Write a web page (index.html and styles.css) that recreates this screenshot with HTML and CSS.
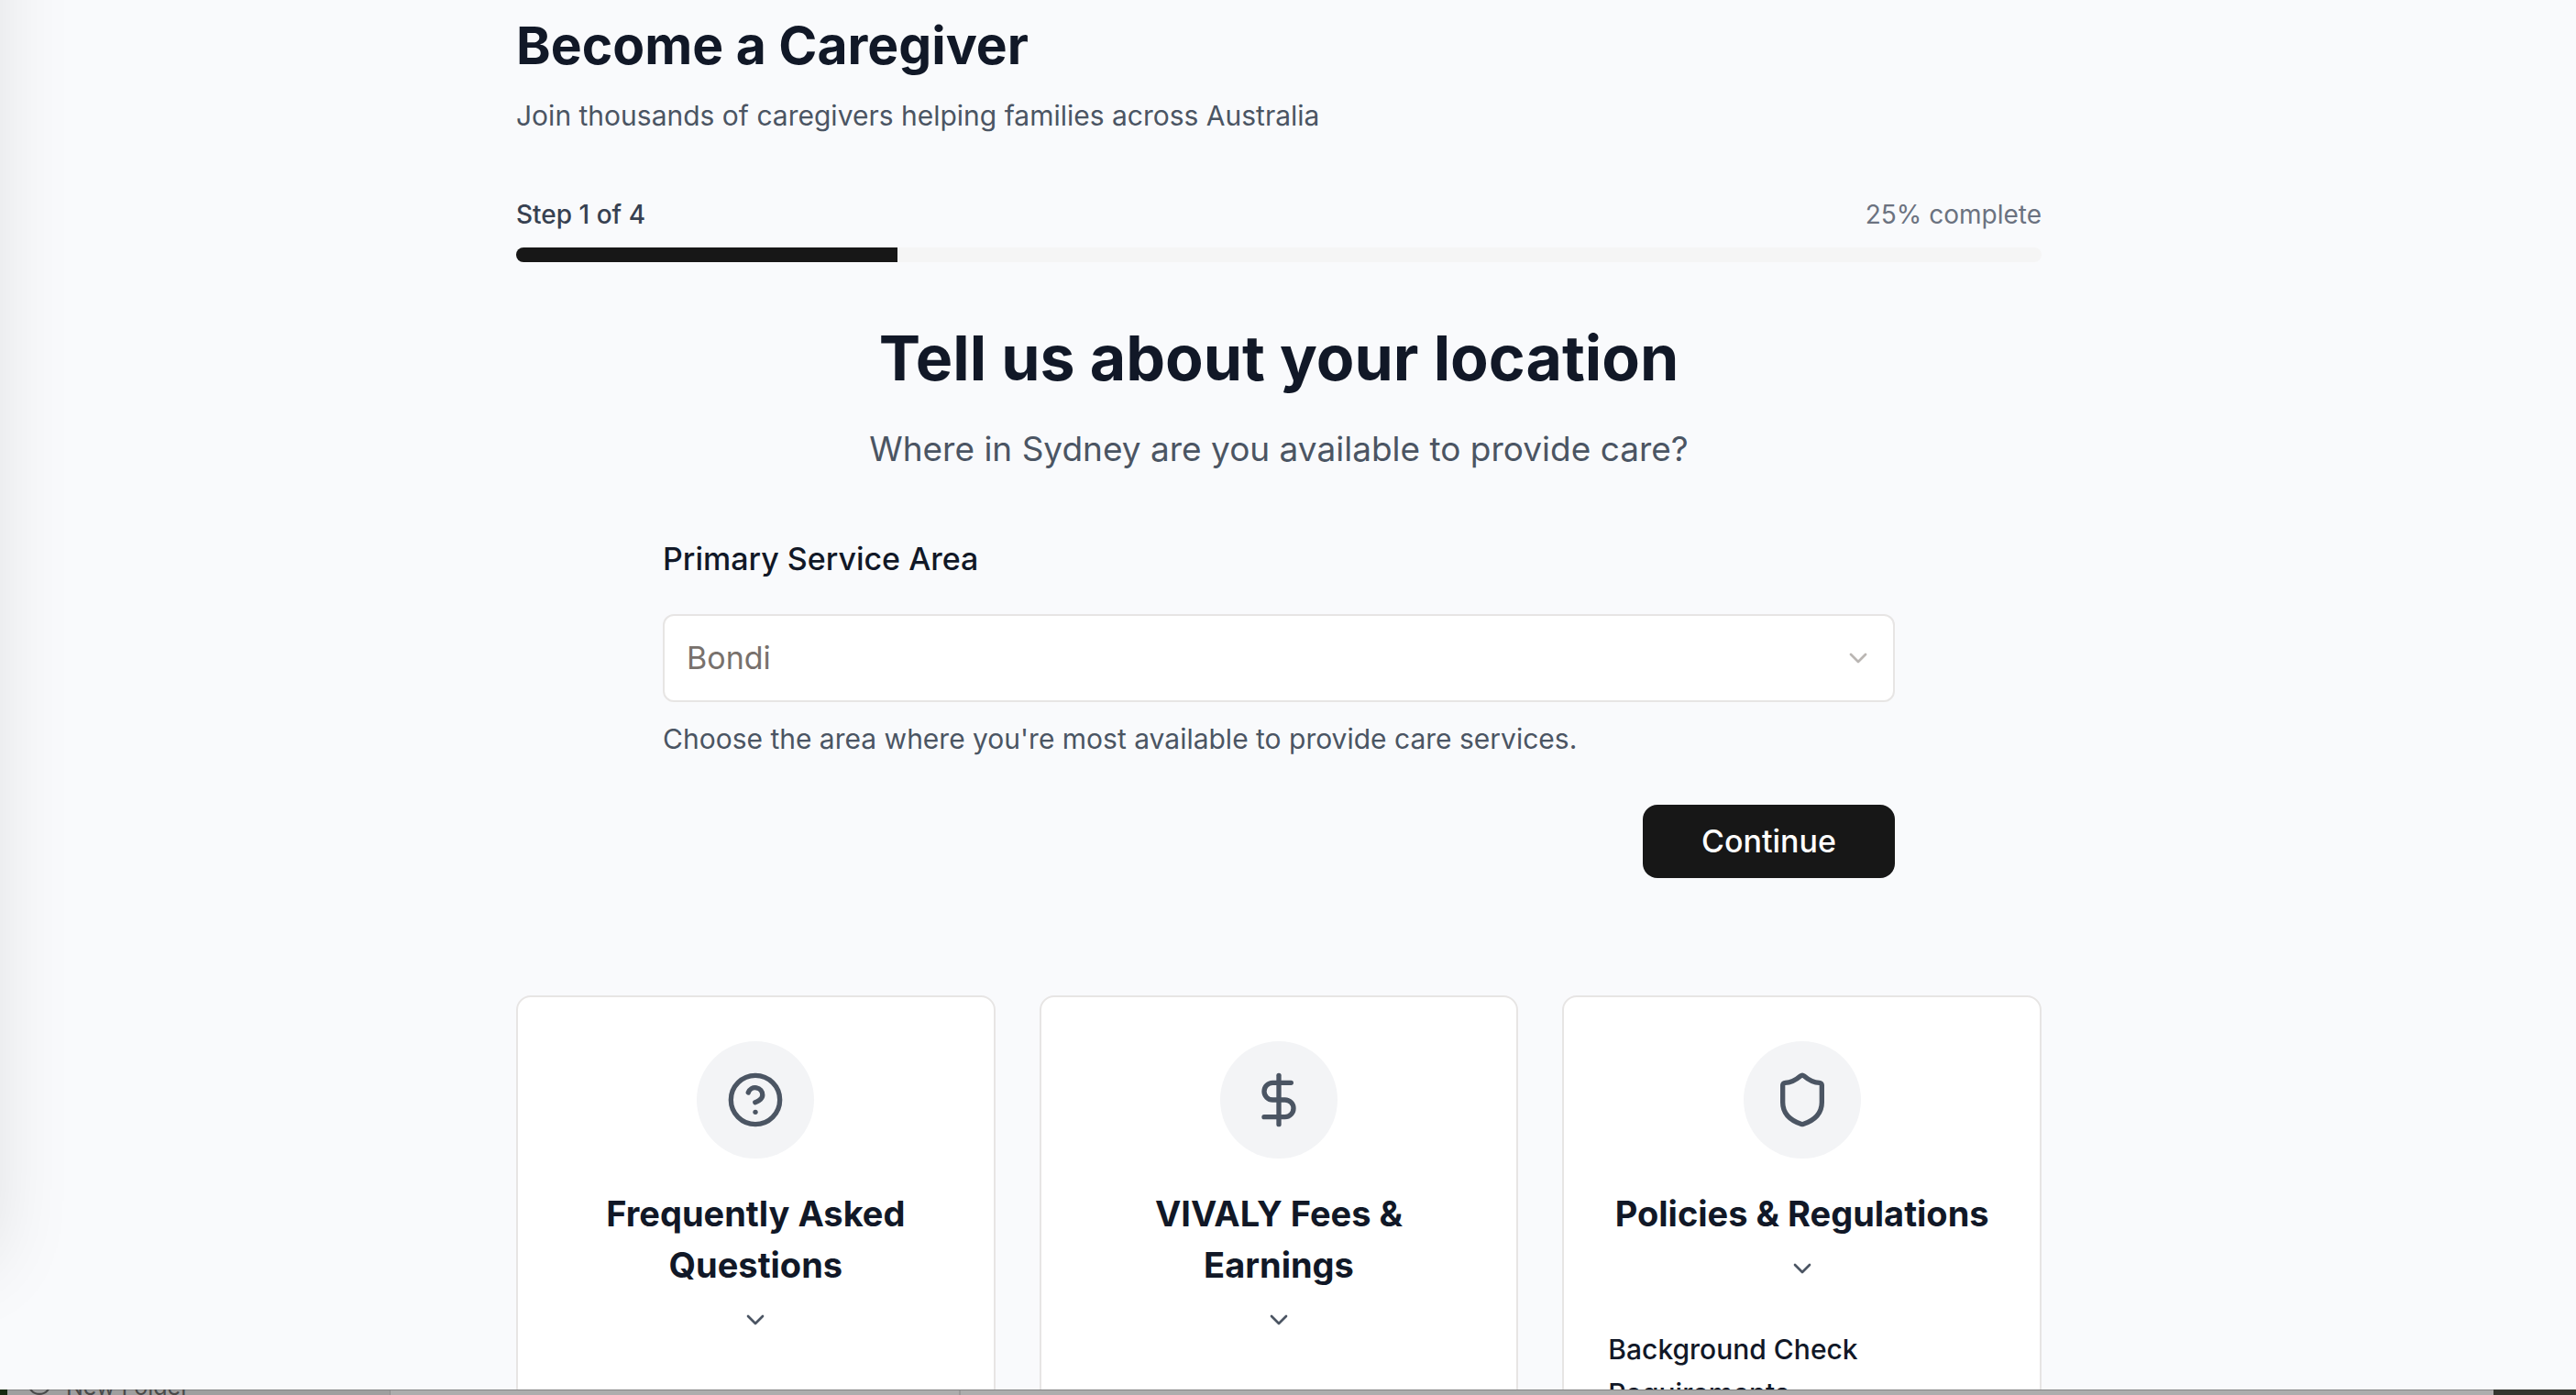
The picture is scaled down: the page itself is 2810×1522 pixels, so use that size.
FILE: index.html
```html
<!DOCTYPE html>
<html lang="en">
<head>
<meta charset="utf-8">
<title>Become a Caregiver</title>
<link rel="stylesheet" href="styles.css">
</head>
<body>
<main class="page">
  <div class="container">
    <header class="intro">
      <h1 class="intro-title">Become a Caregiver</h1>
      <p class="intro-text">Join thousands of caregivers helping families across Australia</p>
    </header>

    <section class="progress">
      <div class="progress-labels">
        <span class="progress-step">Step 1 of 4</span>
        <span class="progress-percent">25% complete</span>
      </div>
      <div class="progress-track"><div class="progress-bar" style="width: 25%"></div></div>
    </section>

    <section class="step">
      <h2 class="step-title">Tell us about your location</h2>
      <p class="step-text">Where in Sydney are you available to provide care?</p>
    </section>

    <form class="form">
      <label class="form-label" for="area">Primary Service Area</label>
      <div class="select">
        <select class="select-input" id="area" aria-describedby="area-help">
          <option>Bondi</option>
        </select>
        <svg class="select-icon" viewBox="0 0 24 24" aria-hidden="true"><path d="m6 9 6 6 6-6"/></svg>
      </div>
      <p class="form-help" id="area-help">Choose the area where you're most available to provide care services.</p>
      <button class="button" type="button">Continue</button>
    </form>

    <section class="cards">
      <article class="card">
        <div class="card-icon">
          <svg viewBox="0 0 24 24" aria-hidden="true"><circle cx="12" cy="12" r="10"/><path d="M9.09 9a3 3 0 0 1 5.83 1c0 2-3 3-3 3"/><path d="M12 17h.01"/></svg>
        </div>
        <h3 class="card-title">Frequently Asked Questions</h3>
        <svg class="card-chevron" viewBox="0 0 24 24" aria-hidden="true"><path d="m6 9 6 6 6-6"/></svg>
      </article>
      <article class="card">
        <div class="card-icon">
          <svg viewBox="0 0 24 24" aria-hidden="true"><path d="M12 2v20"/><path d="M17 5H9.5a3.5 3.5 0 0 0 0 7h5a3.5 3.5 0 0 1 0 7H6"/></svg>
        </div>
        <h3 class="card-title">VIVALY Fees &amp; Earnings</h3>
        <svg class="card-chevron" viewBox="0 0 24 24" aria-hidden="true"><path d="m6 9 6 6 6-6"/></svg>
      </article>
      <article class="card">
        <div class="card-icon">
          <svg viewBox="0 0 24 24" aria-hidden="true"><path d="M20 13c0 5-3.5 7.5-7.66 8.95a1 1 0 0 1-.67-.01C7.5 20.5 4 18 4 13V6a1 1 0 0 1 1-1c2 0 4.5-1.2 6.24-2.72a1.17 1.17 0 0 1 1.52 0C14.51 3.81 17 5 19 5a1 1 0 0 1 1 1z"/></svg>
        </div>
        <h3 class="card-title">Policies &amp; Regulations</h3>
        <svg class="card-chevron" viewBox="0 0 24 24" aria-hidden="true"><path d="m6 9 6 6 6-6"/></svg>
        <h4 class="card-item">Background Check Requirements</h4>
      </article>
    </section>
  </div>
</main>
<footer class="desktop">
  <div class="desktop-window">
    <div class="desktop-sidebar">
      <svg class="desktop-icon" viewBox="0 0 24 24" aria-hidden="true"><circle cx="12" cy="12" r="11"/><path d="M12 7v10M7 12h10"/></svg>
      <span>New Folder</span>
    </div>
    <div class="desktop-list"></div>
    <div class="desktop-detail"></div>
  </div>
</footer>
</body>
</html>
```
FILE: styles.css
```css
* { box-sizing: border-box; margin: 0; }

body {
  display: flex;
  flex-direction: column;
  height: 100vh;
  overflow: hidden;
  background: #f9fafc;
  color: #111827;
  font-family: Inter, "Liberation Sans", sans-serif;
  font-size: 30px;
  line-height: 48px;
}

svg {
  fill: none;
  stroke: currentColor;
  stroke-width: 2;
  stroke-linecap: round;
  stroke-linejoin: round;
}

.page {
  position: relative;
  flex: 1;
  min-height: 0;
  overflow: hidden;
  padding: 14px 20px 0 0;
  background: #f9fafc;
}

/* Shade cast by the neighbouring window on the left */
.page::before {
  content: "";
  position: absolute;
  top: -200px;
  bottom: 140px;
  left: -200px;
  width: 190px;
  box-shadow: 0 0 90px rgba(0, 0, 0, 0.12);
}

.container {
  max-width: 1792px;
  margin: 0 auto;
  padding: 0 64px;
}

.intro { margin-bottom: 64px; }
.intro-title { margin-bottom: 16px; font-size: 57px; font-weight: 700; line-height: 72px; }
.intro-text { color: #4b5563; }

.progress { margin-bottom: 64px; }
.progress-labels {
  display: flex;
  justify-content: space-between;
  margin-bottom: 16px;
  font-size: 28px;
  line-height: 40px;
}
.progress-step { color: #374151; font-weight: 500; }
.progress-percent { color: #6b7280; }
.progress-track { height: 16px; overflow: hidden; border-radius: 8px; background: #f5f5f5; }
.progress-bar { height: 100%; background: #171717; }

.step { margin-bottom: 64px; text-align: center; }
.step-title { margin-bottom: 32px; font-size: 68px; font-weight: 700; line-height: 80px; }
.step-text { color: #4b5563; font-size: 37px; line-height: 56px; }

.form {
  display: flex;
  flex-direction: column;
  max-width: 1344px;
  margin: 0 auto 128px;
}
.form-label { margin-bottom: 32px; font-size: 34px; font-weight: 500; line-height: 56px; }
.select { display: grid; align-items: center; margin-bottom: 16px; }
.select-input {
  grid-area: 1 / 1;
  width: 100%;
  height: 96px;
  padding: 0 24px;
  appearance: none;
  border: 2px solid #e7e5e4;
  border-radius: 12px;
  background: #fff;
  color: #78716c;
  font: inherit;
  font-size: 34px;
}
.select-icon {
  grid-area: 1 / 1;
  justify-self: end;
  width: 32px;
  height: 32px;
  margin-right: 24px;
  color: #bab6b3;
  pointer-events: none;
}
.form-help { margin-bottom: 48px; color: #4b5563; }
.button {
  align-self: flex-end;
  height: 80px;
  padding: 0 64px;
  border: 0;
  border-radius: 16px;
  background: #171717;
  color: #fff;
  font: inherit;
  font-size: 34px;
  font-weight: 500;
}

.cards { display: grid; grid-template-columns: repeat(3, 1fr); gap: 48px; }
.card {
  display: flex;
  flex-direction: column;
  align-items: center;
  min-height: 480px;
  padding: 48px;
  border: 2px solid #e7e5e4;
  border-radius: 16px;
  background: #fff;
}
.card-icon {
  display: grid;
  place-items: center;
  width: 128px;
  height: 128px;
  margin-bottom: 32px;
  border-radius: 50%;
  background: #f3f4f6;
  color: #4b5563;
}
.card-icon svg { width: 64px; height: 64px; }
.card-title { margin-bottom: 16px; font-size: 38px; font-weight: 700; line-height: 56px; text-align: center; }
.card-chevron { width: 32px; height: 32px; margin-bottom: 48px; color: #4b5563; }
.card-item { align-self: stretch; font-size: 30px; font-weight: 500; }

/* Sliver of the desktop that shows under the page */
.desktop {
  flex: none;
  height: 6px;
  overflow: hidden;
  padding: 0 90px 0 8px;
  background: linear-gradient(90deg, #16290f 0 8px, #33362f 8px);
}
.desktop-window { display: flex; height: 100%; border-top: 1px solid #858585; background: #adadad; color: #4a4a4a; }
.desktop-sidebar {
  display: flex;
  align-items: flex-end;
  gap: 16px;
  width: 418px;
  padding-left: 22px;
  border-right: 1px solid #8e8e8e;
  background: #9f9f9f;
  font-size: 25px;
  line-height: 18px;
}
.desktop-icon { flex: none; width: 26px; height: 26px; }
.desktop-list { width: 622px; border-right: 2px solid #999; }
.desktop-detail { flex: 1; }
```
